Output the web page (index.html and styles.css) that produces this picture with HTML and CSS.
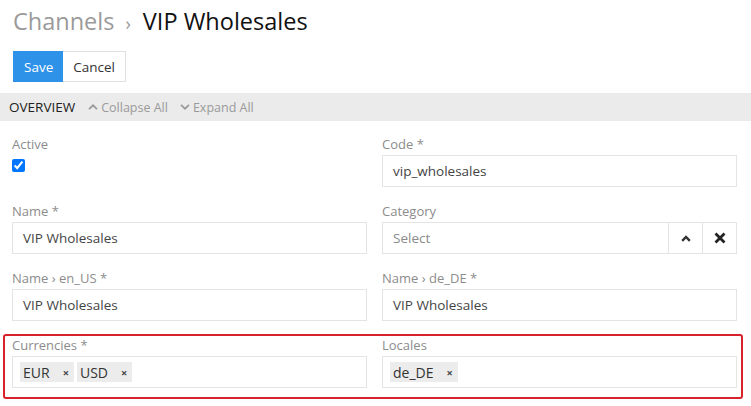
FILE: index.html
```html
<!DOCTYPE html>
<html>
<head>
<meta charset="utf-8">
<link rel="stylesheet" href="styles.css">
</head>
<body>
<div class="top">
  <h1 class="title"><span class="crumb">Channels</span><span class="sep">›</span><span class="current">VIP Wholesales</span></h1>
  <div class="actions">
    <button class="btn btn-primary">Save</button><button class="btn btn-default">Cancel</button>
  </div>
</div>
<div class="section-bar">
  <span class="section-name">OVERVIEW</span>
  <span class="section-link"><svg class="chev" viewBox="0 0 10 6" width="10" height="6"><path d="M1 5.2 L5 1.3 L9 5.2" fill="none" stroke="#9a9a9a" stroke-width="1.7"/></svg>Collapse All</span>
  <span class="section-link"><svg class="chev" viewBox="0 0 10 6" width="10" height="6"><path d="M1 0.8 L5 4.7 L9 0.8" fill="none" stroke="#9a9a9a" stroke-width="1.7"/></svg>Expand All</span>
</div>
<div class="form">
  <div class="grid">
    <div class="field">
      <label class="label">Active</label>
      <input class="check" type="checkbox" checked>
    </div>
    <div class="field">
      <label class="label">Code *</label>
      <div class="input">vip_wholesales</div>
    </div>
    <div class="field">
      <label class="label">Name *</label>
      <div class="input">VIP Wholesales</div>
    </div>
    <div class="field">
      <label class="label">Category</label>
      <div class="select">
        <div class="select-value">Select</div>
        <div class="select-btn"><svg viewBox="0 0 10 7" width="10" height="7"><path d="M1.2 5.8 L5 2 L8.8 5.8" fill="none" stroke="#333" stroke-width="2.4"/></svg></div>
        <div class="select-btn"><svg viewBox="0 0 12 12" width="12" height="12"><path d="M1.5 1.5 L10.5 10.5 M10.5 1.5 L1.5 10.5" fill="none" stroke="#222" stroke-width="2.8"/></svg></div>
      </div>
    </div>
    <div class="field">
      <label class="label">Name › en_US *</label>
      <div class="input">VIP Wholesales</div>
    </div>
    <div class="field">
      <label class="label">Name › de_DE *</label>
      <div class="input">VIP Wholesales</div>
    </div>
  </div>
  <div class="highlight">
    <div class="grid">
      <div class="field">
        <label class="label">Currencies *</label>
        <div class="input tags">
          <span class="tag">EUR<span class="tag-x">×</span></span>
          <span class="tag">USD<span class="tag-x">×</span></span>
        </div>
      </div>
      <div class="field">
        <label class="label">Locales</label>
        <div class="input tags">
          <span class="tag">de_DE<span class="tag-x">×</span></span>
        </div>
      </div>
    </div>
  </div>
</div>
</body>
</html>
```
FILE: styles.css
```css
* { box-sizing: border-box; }
body {
  margin: 0;
  font-family: "Open Sans", "Noto Sans", sans-serif;
  color: #333;
  background: #fff;
}
.top {
  padding: 5px 14px 0 13px;
}
.title {
  margin: 0;
  font-size: 23.5px;
  font-weight: 400;
  line-height: 32px;
  height: 32px;
  display: flex;
  align-items: baseline;
  overflow: hidden;
}
.crumb { color: #9a9a9a; }
.sep { color: #9a9a9a; font-size: 18px; line-height: 32px; margin: 0 12px 0 11px; }
.current { color: #111; }
.actions {
  margin-top: 14px;
  display: flex;
}
.btn {
  font-family: inherit;
  font-size: 13.5px;
  height: 31px;
  padding: 0 10px;
  border: 1px solid #e0e0e0;
  background: #fff;
  color: #333;
  margin: 0;
  border-radius: 0;
}
.btn-primary {
  background: #2f92e9;
  border-color: #2f92e9;
  color: #fff;
  width: 50px;
}
.btn-default {
  border-left: 0;
  width: 63px;
}
.section-bar {
  margin-top: 11px;
  height: 28px;
  background: #ebebeb;
  display: flex;
  align-items: center;
  padding-left: 9px;
}
.section-name {
  font-size: 13.5px;
  color: #222;
  margin-right: 13px;
}
.section-link {
  font-size: 12.5px;
  color: #9a9a9a;
  display: flex;
  align-items: center;
  margin-right: 12px;
}
.chev { margin-right: 3px; }
.form {
  padding: 14px 14px 0 12px;
}
.grid {
  display: grid;
  grid-template-columns: 1fr 1fr;
  column-gap: 15px;
  row-gap: 15px;
}
.field {
  display: flex;
  flex-direction: column;
}
.label {
  font-size: 13px;
  line-height: 18px;
  color: #8c8c8c;
  margin-bottom: 2px;
}
.check {
  margin: 4px 0 0 0;
  width: 13px;
  height: 13px;
}
.input {
  height: 32px;
  border: 1px solid #e4e4e4;
  padding: 0 10px;
  font-size: 13.5px;
  color: #444;
  display: flex;
  align-items: center;
}
.select {
  height: 32px;
  border: 1px solid #e4e4e4;
  display: flex;
}
.select-value {
  flex: 1;
  padding: 0 10px;
  font-size: 13.5px;
  color: #8a8a8a;
  display: flex;
  align-items: center;
}
.select-btn {
  width: 34px;
  border-left: 1px solid #e4e4e4;
  display: flex;
  align-items: center;
  justify-content: center;
}
.highlight {
  margin: 13px -6px 0 -9px;
  border: 2px solid #d8222b;
  border-radius: 3px;
  padding: 0 4px 9px 7px;
}
.tags {
  padding: 0 7px;
  gap: 3px;
}
.tag {
  background: #ececec;
  height: 20px;
  display: inline-flex;
  align-items: center;
  padding: 0 5px 0 3px;
  font-size: 14px;
  color: #333;
}
.tag-x {
  font-size: 11px;
  font-weight: 700;
  margin-left: 13px;
  color: #444;
}
```
